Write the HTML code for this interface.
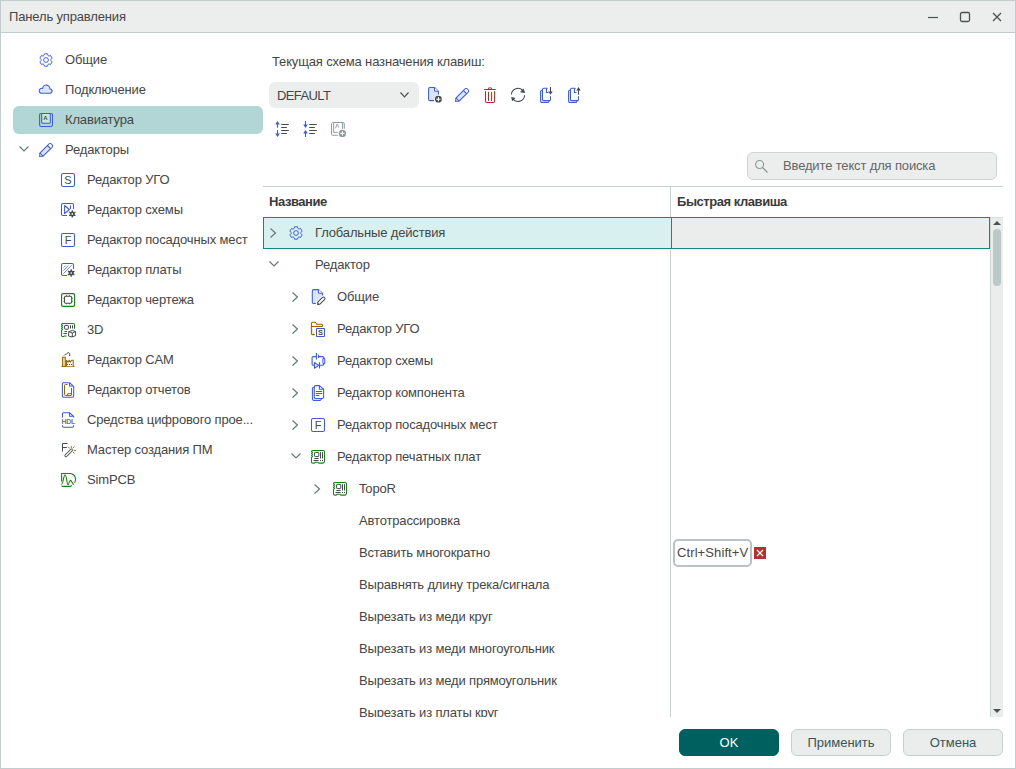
<!DOCTYPE html>
<html><head><meta charset="utf-8">
<style>
*{margin:0;padding:0;box-sizing:border-box}
html,body{width:1016px;height:769px;overflow:hidden;background:#fff}
body{font-family:"Liberation Sans",sans-serif;font-size:13px;color:#464646;position:relative}
.a{position:absolute}
.t{position:absolute;white-space:nowrap;line-height:16px;letter-spacing:-0.15px}
svg{position:absolute;overflow:visible}
#win{left:0;top:0;width:1016px;height:769px;border:1px solid #c3cdcd}
#title{left:1px;top:1px;width:1014px;height:32px;background:#eceeee;border-bottom:1px solid #c3cdcd}
.hl{left:13px;top:106px;width:250px;height:28px;background:#b2d6d5;border-radius:6px}
.combo{left:269px;top:82px;width:150px;height:26px;background:#ebeeed;border-radius:6px}
.search{left:747px;top:152px;width:250px;height:28px;background:#ebeeed;border:1px solid #ccd5d4;border-radius:6px}
.hline{left:263px;top:186px;width:740px;height:1px;background:#c8d0d0}
.vline{left:670px;top:186px;width:1px;height:531px;background:#c8d0d0}
.selrow{left:263px;top:217px;width:727px;height:32px;border:1px solid #138985;background:#d8f1f0}
.selright{left:671px;top:217px;width:319px;height:32px;background:#ebeded;border:1px solid #138985;border-right:1px solid #138985}
.track{left:990px;top:217px;width:13px;height:500px;background:#ebeded;border-left:1px solid #d0d8d8;border-top:1px solid #d6dede}
.thumb{left:993px;top:229px;width:8px;height:57px;background:#bac8c8;border-radius:4px}
.btn{top:729px;width:100px;height:27px;border-radius:6px;background:#ebeded;border:1px solid #c5d0d0;text-align:center;line-height:25px;color:#345656}
.ok{left:679px;background:#005f5f;border-color:#005f5f;color:#fff}
.key{left:673px;top:539px;width:79px;height:28px;border:2px solid #b8c4c4;border-radius:5px;background:#fff}
.redx{left:754px;top:547px;width:12px;height:12px;background:#b03232}
.hdr{font-weight:bold;color:#3a3a3a}
</style></head><body>
<div id="win" class="a"></div>
<div id="title" class="a"></div>
<div class="t" style="left:9px;top:9px">Панель управления</div>
<!-- window controls -->
<svg style="left:920px;top:8px" width="90" height="20">
  <line x1="8" y1="9.5" x2="18" y2="9.5" stroke="#4a5252" stroke-width="1.2"/>
  <rect x="40.5" y="4.5" width="9" height="9" rx="1.5" fill="none" stroke="#4a5252" stroke-width="1.3"/>
  <path d="M73 5 L81 13 M81 5 L73 13" stroke="#4a5252" stroke-width="1.3"/>
</svg>

<!-- sidebar -->
<div class="a hl"></div>
<div class="t" style="left:65px;top:52px">Общие</div>
<div class="t" style="left:65px;top:82px">Подключение</div>
<div class="t" style="left:65px;top:112px">Клавиатура</div>
<div class="t" style="left:65px;top:142px">Редакторы</div>
<div class="t" style="left:87px;top:172px">Редактор УГО</div>
<div class="t" style="left:87px;top:202px">Редактор схемы</div>
<div class="t" style="left:87px;top:232px">Редактор посадочных мест</div>
<div class="t" style="left:87px;top:262px">Редактор платы</div>
<div class="t" style="left:87px;top:292px">Редактор чертежа</div>
<div class="t" style="left:87px;top:322px">3D</div>
<div class="t" style="left:87px;top:352px">Редактор CAM</div>
<div class="t" style="left:87px;top:382px">Редактор отчетов</div>
<div class="t" style="left:87px;top:412px">Средства цифрового прое...</div>
<div class="t" style="left:87px;top:442px">Мастер создания ПМ</div>
<div class="t" style="left:87px;top:472px">SimPCB</div>


<!-- right panel -->
<div class="t" style="left:272px;top:54px">Текущая схема назначения клавиш:</div>
<div class="a combo"></div>
<div class="t" style="left:277px;top:88px;letter-spacing:-0.6px">DEFAULT</div>
<svg style="left:400px;top:92px" width="10" height="6"><path d="M0.5 0.5 L4.5 4.8 L8.5 0.5" fill="none" stroke="#4a5252" stroke-width="1.2"/></svg>

<div class="a search"></div>
<div class="t" style="left:783px;top:158px;color:#666">Введите текст для поиска</div>

<div class="a hline"></div>
<div class="a vline"></div>
<div class="t hdr" style="left:269px;top:194px;letter-spacing:-0.45px">Название</div>
<div class="t hdr" style="left:677px;top:194px;letter-spacing:-0.45px">Быстрая клавиша</div>

<div class="a selrow"></div>
<div class="a selright"></div>
<div class="a track"></div>
<div class="a thumb"></div>
<svg style="left:993px;top:221px" width="8" height="4"><path d="M0 4 L4 0 L8 4Z" fill="#4a5252"/></svg>
<svg style="left:993px;top:709px" width="8" height="4"><path d="M0 0 L4 4 L8 0Z" fill="#4a5252"/></svg>

<div class="a" style="left:263px;top:217px;width:727px;height:500px;overflow:hidden">
<div class="t" style="left:52px;top:8px">Глобальные действия</div>
<div class="t" style="left:52px;top:40px">Редактор</div>
<div class="t" style="left:74px;top:72px">Общие</div>
<div class="t" style="left:74px;top:104px">Редактор УГО</div>
<div class="t" style="left:74px;top:136px">Редактор схемы</div>
<div class="t" style="left:74px;top:168px">Редактор компонента</div>
<div class="t" style="left:74px;top:200px">Редактор посадочных мест</div>
<div class="t" style="left:74px;top:232px">Редактор печатных плат</div>
<div class="t" style="left:96px;top:264px">TopoR</div>
<div class="t" style="left:96px;top:296px">Автотрассировка</div>
<div class="t" style="left:96px;top:328px">Вставить многократно</div>
<div class="t" style="left:96px;top:360px">Выравнять длину трека/сигнала</div>
<div class="t" style="left:96px;top:392px">Вырезать из меди круг</div>
<div class="t" style="left:96px;top:424px">Вырезать из меди многоугольник</div>
<div class="t" style="left:96px;top:456px">Вырезать из меди прямоугольник</div>
<div class="t" style="left:96px;top:488px">Вырезать из платы круг</div>
</div>

<svg style="left:34px;top:48px" width="24" height="24" viewBox="0 0 24 24"><path d="M13.99 7.52 L13.44 5.76 L10.56 5.76 L10.01 7.52 L9.12 8.04 L7.32 7.64 L5.88 10.13 L7.13 11.49 L7.13 12.51 L5.88 13.87 L7.32 16.36 L9.12 15.96 L10.01 16.48 L10.56 18.24 L13.44 18.24 L13.99 16.48 L14.88 15.96 L16.68 16.36 L18.12 13.87 L16.87 12.51 L16.87 11.49 L18.12 10.13 L16.68 7.64 L14.88 8.04Z" fill="none" stroke="#3d5bd6" stroke-width="0.95" stroke-linejoin="round"/><circle cx="12" cy="12" r="2.4" fill="none" stroke="#3d5bd6" stroke-width="0.95"/></svg>
<svg style="left:34.4px;top:80px" width="24" height="24" viewBox="0 0 24 24"><path d="M6.9 13.3 H15.9 A2.2 2.2 0 0 0 15.9 8.9 A3.6 3.6 0 0 0 8.7 8.5 A2.45 2.45 0 0 0 6.9 13.3Z" fill="#dbe4fb" stroke="#3d5bd6" stroke-width="1.05" stroke-linejoin="round"/></svg>
<svg style="left:35px;top:108px" width="24" height="24" viewBox="0 0 24 24"><path d="M6.4 5.4 H5.9 A1.3 1.3 0 0 0 4.6 6.7 V17.1 A1.3 1.3 0 0 0 5.9 18.4 H16.2 A1.3 1.3 0 0 0 17.5 17.1 V6.7 A1.3 1.3 0 0 0 16.2 5.4 H15.6" fill="none" stroke="#3d5bd6" stroke-width="1.05"/><path d="M6.7 5.4 H15.3 V14.6 A0.6 0.6 0 0 1 14.7 15.2 H7.3 A0.6 0.6 0 0 1 6.7 14.6Z" fill="#c9e8dd" stroke="#3d5bd6" stroke-width="1.05"/><text x="10.4" y="11.8" text-anchor="middle" font-family="Liberation Sans" font-weight="bold" font-size="6" fill="#424c4c">A</text></svg>
<svg style="left:36px;top:138px" width="24" height="24" viewBox="0 0 24 24"><g transform="rotate(-45 9.3 12.8)"><path d="M1.500000000000001 12.8 L3.9000000000000012 10.55 H16.15 A2.25 2.25 0 0 1 16.15 15.05 H3.9000000000000012 Z" fill="#dbe4fb" stroke="#3d5bd6" stroke-width="1.1" stroke-linejoin="round"/><path d="M0.5000000000000011 12.8 L1.8000000000000012 12.0 V13.600000000000001Z" fill="#3d5bd6"/><path d="M14.549999999999999 11.05 H16.15 A1.75 1.75 0 0 1 16.15 14.55 H14.549999999999999Z" fill="#fff"/><path d="M3.9000000000000012 10.55 V15.05 M14.549999999999999 10.55 V15.05" stroke="#3d5bd6" stroke-width="1.1"/><path d="M2.4000000000000012 12.3 L3.300000000000001 11.700000000000001 V13.9Z" fill="#fff"/></g></svg>
<svg style="left:17px;top:144px" width="14" height="10" viewBox="0 0 14 10"><path d="M2.5 2.5 L7 7 L11.5 2.5" fill="none" stroke="#6b7777" stroke-width="1.2"/></svg>
<svg style="left:57px;top:168px" width="24" height="24" viewBox="0 0 24 24"><rect x="4.5" y="5.5" width="13" height="13" rx="1.6" fill="#fff" stroke="#3d5bd6" stroke-width="1.05"/><text x="11" y="16.2" text-anchor="middle" font-family="Liberation Sans" font-size="11" fill="#424c4c">S</text></svg>
<svg style="left:57px;top:198px" width="24" height="24" viewBox="0 0 24 24"><path d="M10 17.5 H6 A1.5 1.5 0 0 1 4.5 16 V7 A1.5 1.5 0 0 1 6 5.5 H15 A1.5 1.5 0 0 1 16.5 7 V11" fill="none" stroke="#3d5bd6" stroke-width="1.05"/><path d="M7.6 7.5 V15.5 L12.4 11.5Z" fill="none" stroke="#3d5bd6" stroke-width="1.05" stroke-linejoin="round"/><path d="M13.5 7.4 V11" stroke="#3d5bd6" stroke-width="1.05"/><circle cx="15.3" cy="15.9" r="3.3" fill="#fff"/><path d="M15.30 19.60 L15.30 12.20" stroke="#424c4c" stroke-width="1.25"/><path d="M12.10 17.75 L18.50 14.05" stroke="#424c4c" stroke-width="1.25"/><path d="M18.50 17.75 L12.10 14.05" stroke="#424c4c" stroke-width="1.25"/><circle cx="15.3" cy="15.9" r="1.75" fill="none" stroke="#424c4c" stroke-width="1.5"/><circle cx="15.3" cy="15.9" r="0.85" fill="#fff"/></svg>
<svg style="left:57px;top:228px" width="24" height="24" viewBox="0 0 24 24"><rect x="4.5" y="5.5" width="13" height="13" rx="1.6" fill="#fff" stroke="#3d5bd6" stroke-width="1.05"/><text x="11" y="16.2" text-anchor="middle" font-family="Liberation Sans" font-size="11" fill="#424c4c">F</text></svg>
<svg style="left:57px;top:258px" width="24" height="24" viewBox="0 0 24 24"><path d="M10 17.5 H6 A1.5 1.5 0 0 1 4.5 16 V7 A1.5 1.5 0 0 1 6 5.5 H15 A1.5 1.5 0 0 1 16.5 7 V11" fill="none" stroke="#3d5bd6" stroke-width="1.05"/><path d="M6.5 9.5 L8.5 7.5 M6.5 12.5 L11.5 7.5 M6.5 15.5 L14.5 7.5" stroke="#3d5bd6" stroke-width="0.95" stroke-opacity="0.8"/><circle cx="14.2" cy="15" r="3.3" fill="#fff"/><path d="M14.20 18.70 L14.20 11.30" stroke="#424c4c" stroke-width="1.25"/><path d="M11.00 16.85 L17.40 13.15" stroke="#424c4c" stroke-width="1.25"/><path d="M17.40 16.85 L11.00 13.15" stroke="#424c4c" stroke-width="1.25"/><circle cx="14.2" cy="15" r="1.75" fill="none" stroke="#424c4c" stroke-width="1.5"/><circle cx="14.2" cy="15" r="0.85" fill="#fff"/></svg>
<svg style="left:57px;top:288px" width="24" height="24" viewBox="0 0 24 24"><rect x="4.6" y="5.6" width="13" height="12.8" rx="1.3" fill="none" stroke="#178217" stroke-width="1.15"/><rect x="7.5" y="8.3" width="7.2" height="7" rx="1.2" fill="none" stroke="#424c4c" stroke-width="1.05"/><path d="M9.5 7.3 V8.3 M12.5 7.3 V8.3 M9.5 15.3 V16.3 M12.5 15.3 V16.3 M6.5 10.3 H7.5 M6.5 13.3 H7.5 M14.7 10.3 H15.7 M14.7 13.3 H15.7" stroke="#424c4c" stroke-width="1"/></svg>
<svg style="left:57px;top:318px" width="24" height="24" viewBox="0 0 24 24"><path d="M9.6 17.9 H7.5 L7 18.4 H5.7 A1.2 1.2 0 0 1 4.5 17.2 V12.3 L5.6 11.4 L4.5 10.4 L5.6 9.4 L4.5 8.4 L5.6 7.4 L4.5 6.7 A1.2 1.2 0 0 1 5.7 5.5 H16.3 A1.2 1.2 0 0 1 17.5 6.7 V10.7" fill="none" stroke="#178217" stroke-width="1.05" stroke-linejoin="round"/><rect x="7.6" y="7.5" width="3.8" height="3.7" rx="0.5" fill="none" stroke="#424c4c" stroke-width="1"/><path d="M13.5 7.3 V10.5 M15.5 7.3 V10.5 M7.5 13.5 H10 M6.5 15.5 H10" stroke="#424c4c" stroke-width="1"/><path d="M11.8 13.6 L15.5 12.4 L18.6 13.6 V17.6 L15 19 L11.5 18 Z M11.8 13.6 L15.3 15 L18.6 13.6 M15.3 15 V19" fill="#fff" stroke="#424c4c" stroke-width="1" stroke-linejoin="round"/></svg>
<svg style="left:57px;top:348px" width="24" height="24" viewBox="0 0 24 24"><path d="M4.5 18.4 H17.5" stroke="#956600" stroke-width="1.1"/><rect x="5.6" y="9.3" width="2.7" height="9" fill="#f0e4c8" stroke="#956600" stroke-width="1.05"/><path d="M9.5 18.2 V12.3 L11 14.3 L12.2 12.3 L13.3 14.3 L14.5 12.3 L16.2 12.3 V18.2" fill="#fff" stroke="#956600" stroke-width="1.05" stroke-linejoin="round"/><circle cx="10.5" cy="16.4" r="0.55" fill="#424c4c"/><circle cx="12.5" cy="16.4" r="0.55" fill="#424c4c"/><circle cx="14.5" cy="16.4" r="0.55" fill="#424c4c"/><path d="M7 7.5 C8 6 9.5 6.5 10 5.5 C11 4 13.8 4.5 12.5 8" fill="none" stroke="#424c4c" stroke-width="1"/></svg>
<svg style="left:57px;top:378px" width="24" height="24" viewBox="0 0 24 24"><path d="M6.3 4.7 H12.5 L16.7 8.4 V18 A1.2 1.2 0 0 1 15.5 19.2 H6.6 A1.2 1.2 0 0 1 5.4 18 V5.9 A1.2 1.2 0 0 1 6.3 4.7Z M12.5 4.7 V8 H16.5" fill="#fff" stroke="#3d5bd6" stroke-width="1.05" stroke-linejoin="round"/><path d="M10.5 6.5 H8.4 A1 1 0 0 0 7.5 7.5 V16.5 A1 1 0 0 0 8.5 17.5 H14 A0.6 0.6 0 0 0 14.5 17 V10" fill="none" stroke="#956600" stroke-width="1"/><path d="M10.5 17.5 V16.2 A0.6 0.6 0 0 1 11 15.7 H14.5" fill="none" stroke="#956600" stroke-width="1"/></svg>
<svg style="left:57px;top:408px" width="24" height="24" viewBox="0 0 24 24"><path d="M5.5 9.5 V5.9 A1.2 1.2 0 0 1 6.6 4.7 H12.5 L16.7 8.5 V9.5 M12.5 4.7 V8.2 H16.5 M5.5 17.3 V18 A1.2 1.2 0 0 0 6.6 19.2 H15.5 A1.2 1.2 0 0 0 16.6 18 V17.3" fill="none" stroke="#3d5bd6" stroke-width="1.05" stroke-linejoin="round"/><text x="11.2" y="16" text-anchor="middle" font-family="Liberation Sans" font-weight="bold" font-size="7" fill="#6f7878" letter-spacing="-0.4">HDL</text></svg>
<svg style="left:57px;top:438px" width="24" height="24" viewBox="0 0 24 24"><path d="M5.5 13.6 V5.5 H10.5 M5.5 9.5 H9.8" fill="none" stroke="#424c4c" stroke-width="1"/><path d="M8.9 17.6 L14.4 12.1" stroke="#5a6464" stroke-width="3.2" stroke-linecap="round"/><path d="M8.9 17.6 L14.4 12.1" stroke="#fff" stroke-width="1.3" stroke-linecap="round"/><path d="M14.3 8.3 V9.9 M17 8.8 L16 10 M18.6 12.5 H17.2 M17.3 15.2 L16.2 14.2 M11.3 9 L12.5 10.2" stroke="#956600" stroke-width="0.9" stroke-linecap="round"/></svg>
<svg style="left:57px;top:468px" width="24" height="24" viewBox="0 0 24 24"><path d="M4.6 13.6 V5.5 H13.5 A6 6 0 0 1 17.6 14.8 M4.6 18.4 H13.5 L14.8 17.3" fill="none" stroke="#178217" stroke-width="1.1"/><path d="M4.3 16.4 C6.5 16.4 6.3 7 8 7 C9.7 7 9.8 16.7 11 16.7 C12 16.7 12.3 12.4 13.5 12.4 C14.7 12.4 15.5 16.5 17 16.6" fill="none" stroke="#178217" stroke-width="1.1"/></svg>
<svg style="left:424px;top:83px" width="24" height="24" viewBox="0 0 24 24"><path d="M10 17.6 H6 A1.4 1.4 0 0 1 4.6 16.2 V5.9 A1.4 1.4 0 0 1 6 4.5 H10.5 L14.5 8.3 V11.5" fill="#dbe4fb" stroke="#3d5bd6" stroke-width="1.05" stroke-linejoin="round"/><path d="M10.5 4.5 V7.2 A1 1 0 0 0 11.5 8.2 H14.5" fill="#fff" stroke="#3d5bd6" stroke-width="1.05"/><circle cx="14.4" cy="16.2" r="3.4" fill="#424c4c"/><path d="M14.4 14.1 V18.3 M12.3 16.2 H16.5" stroke="#fff" stroke-width="1.1"/></svg>
<svg style="left:452px;top:83px" width="24" height="24" viewBox="0 0 24 24"><g transform="rotate(-45 9.3 12.8)"><path d="M1.500000000000001 12.8 L3.9000000000000012 10.55 H16.15 A2.25 2.25 0 0 1 16.15 15.05 H3.9000000000000012 Z" fill="#dbe4fb" stroke="#3d5bd6" stroke-width="1.1" stroke-linejoin="round"/><path d="M0.5000000000000011 12.8 L1.8000000000000012 12.0 V13.600000000000001Z" fill="#3d5bd6"/><path d="M14.549999999999999 11.05 H16.15 A1.75 1.75 0 0 1 16.15 14.55 H14.549999999999999Z" fill="#fff"/><path d="M3.9000000000000012 10.55 V15.05 M14.549999999999999 10.55 V15.05" stroke="#3d5bd6" stroke-width="1.1"/><path d="M2.4000000000000012 12.3 L3.300000000000001 11.700000000000001 V13.9Z" fill="#fff"/></g></svg>
<svg style="left:480px;top:83px" width="24" height="24" viewBox="0 0 24 24"><path d="M4.2 6.5 H15.8 M8.3 6.5 A1.7 1.7 0 0 1 11.7 6.5" fill="none" stroke="#b02c2c" stroke-width="1.05"/><path d="M5.5 8.4 V18 A1.4 1.4 0 0 0 6.9 19.4 H13.3 A1.4 1.4 0 0 0 14.6 18 V8.4 M8.5 9.3 V17.5 M11.6 9.3 V17.5" fill="none" stroke="#b02c2c" stroke-width="1.05" stroke-linecap="round"/></svg>
<svg style="left:508px;top:83px" width="24" height="24" viewBox="0 0 24 24"><path d="M3.4 11.5 A6.6 6.6 0 0 1 14.8 7.5" fill="none" stroke="#424c4c" stroke-width="1.05"/><path d="M15.4 5.8 L16.7 9.7 L12.6 9.1Z" fill="#424c4c" stroke="#424c4c" stroke-width="0.6" stroke-linejoin="round"/><path d="M16.6 12.2 A6.6 6.6 0 0 1 5.4 16.6" fill="none" stroke="#424c4c" stroke-width="1.05"/><path d="M3.5 14.3 L7.1 15.2 L4.4 17.9Z" fill="#424c4c" stroke="#424c4c" stroke-width="0.6" stroke-linejoin="round"/></svg>
<svg style="left:536px;top:83px" width="24" height="24" viewBox="0 0 24 24"><path d="M6.5 7.2 H5.8 A1.2 1.2 0 0 0 4.6 8.4 V18.3 A1.2 1.2 0 0 0 5.8 19.5 H11.7 A1.2 1.2 0 0 0 12.9 18.3 V17.6" fill="#dbe4fb" stroke="#3d5bd6" stroke-width="1.05"/><path d="M11.5 5.9 L10.8 5.3 H7.7 A1.2 1.2 0 0 0 6.5 6.5 V16.4 A1.2 1.2 0 0 0 7.7 17.6 H13.3 A1.2 1.2 0 0 0 14.5 16.4 V13.3" fill="#fff" stroke="#3d5bd6" stroke-width="1.05"/><path d="M10.5 5.8 V9.5 H12.5" fill="none" stroke="#3d5bd6" stroke-width="1.05"/><path d="M14.5 4 V10.5" stroke="#424c4c" stroke-width="1.1"/><path d="M12.3 8.4 H16.7 L14.5 11.8Z" fill="#424c4c"/></svg>
<svg style="left:564px;top:83px" width="24" height="24" viewBox="0 0 24 24"><path d="M6.5 7.2 H5.8 A1.2 1.2 0 0 0 4.6 8.4 V18.3 A1.2 1.2 0 0 0 5.8 19.5 H11.7 A1.2 1.2 0 0 0 12.9 18.3 V17.6" fill="#dbe4fb" stroke="#3d5bd6" stroke-width="1.05"/><path d="M11.5 5.9 L10.8 5.3 H7.7 A1.2 1.2 0 0 0 6.5 6.5 V16.4 A1.2 1.2 0 0 0 7.7 17.6 H13.3 A1.2 1.2 0 0 0 14.5 16.4 V13.3" fill="#fff" stroke="#3d5bd6" stroke-width="1.05"/><path d="M10.5 5.8 V9.5 H12.5" fill="none" stroke="#3d5bd6" stroke-width="1.05"/><path d="M14.5 6.5 V11.7" stroke="#424c4c" stroke-width="1.1"/><path d="M12.3 7.6 H16.7 L14.5 4.1Z" fill="#424c4c"/></svg>
<svg style="left:270px;top:117px" width="24" height="24" viewBox="0 0 24 24"><path d="M7.5 5 V10.8 M7.5 13 V19" stroke="#3d5bd6" stroke-width="1.1"/><path d="M5.2 7.6 L7.5 4.1 L9.8 7.6Z M5.2 16.4 L7.5 19.9 L9.8 16.4Z" fill="#3d5bd6"/><path d="M11.2 7.5 H18.8 M11.2 10.5 H16.8 M11.2 13.5 H18.8 M11.2 16.5 H16.8" stroke="#424c4c" stroke-width="1.05"/></svg>
<svg style="left:298px;top:117px" width="24" height="24" viewBox="0 0 24 24"><path d="M7.5 4 V9.5 M7.5 14 V20" stroke="#3d5bd6" stroke-width="1.1"/><path d="M5.2 7.4 L7.5 10.9 L9.8 7.4Z M5.2 16.6 L7.5 13.1 L9.8 16.6Z" fill="#3d5bd6"/><path d="M11.2 7.5 H18.8 M11.2 10.5 H16.8 M11.2 13.5 H18.8 M11.2 16.5 H16.8" stroke="#424c4c" stroke-width="1.05"/></svg>
<svg style="left:326px;top:117px" width="24" height="24" viewBox="0 0 24 24"><path d="M6.2 5.9 A1 1 0 0 0 5.5 6.9 V17.3 A1 1 0 0 0 6.5 18.3 H11.8 M6.3 5.5 H17.2 A1.1 1.1 0 0 1 18.3 6.6 V11.8 M7.6 5.5 V15.3 H11.8 M16.6 5.5 V11.8" fill="none" stroke="#8c9999" stroke-width="0.95"/><path d="M9.5 11.3 L10.8 7.4 H11.5 L12.6 10.6" fill="none" stroke="#8c9999" stroke-width="0.9"/><circle cx="16.4" cy="16.4" r="3.6" fill="#8c9999"/><path d="M16.4 14.2 V18.6 M14.2 16.4 H18.6" stroke="#fff" stroke-width="1.1"/></svg>
<svg style="left:749px;top:154px" width="24" height="24" viewBox="0 0 24 24"><circle cx="10.6" cy="10.5" r="4" fill="none" stroke="#8a9696" stroke-width="1.05"/><path d="M13.5 13.5 L18.5 18.5" stroke="#8a9696" stroke-width="1.1"/></svg>
<svg style="left:268px;top:226px" width="12" height="14" viewBox="0 0 12 14"><path d="M2.5 2.5 L7.5 7 L2.5 11.5" fill="none" stroke="#6b7777" stroke-width="1.2"/></svg>
<svg style="left:284px;top:221px" width="24" height="24" viewBox="0 0 24 24"><path d="M13.99 7.52 L13.44 5.76 L10.56 5.76 L10.01 7.52 L9.12 8.04 L7.32 7.64 L5.88 10.13 L7.13 11.49 L7.13 12.51 L5.88 13.87 L7.32 16.36 L9.12 15.96 L10.01 16.48 L10.56 18.24 L13.44 18.24 L13.99 16.48 L14.88 15.96 L16.68 16.36 L18.12 13.87 L16.87 12.51 L16.87 11.49 L18.12 10.13 L16.68 7.64 L14.88 8.04Z" fill="none" stroke="#3d5bd6" stroke-width="0.95" stroke-linejoin="round"/><circle cx="12" cy="12" r="2.4" fill="none" stroke="#3d5bd6" stroke-width="0.95"/></svg>
<svg style="left:267px;top:259px" width="14" height="10" viewBox="0 0 14 10"><path d="M2.5 2.5 L7 7 L11.5 2.5" fill="none" stroke="#6b7777" stroke-width="1.2"/></svg>
<svg style="left:290px;top:290px" width="12" height="14" viewBox="0 0 12 14"><path d="M2.5 2.5 L7.5 7 L2.5 11.5" fill="none" stroke="#6b7777" stroke-width="1.2"/></svg>
<svg style="left:290px;top:322px" width="12" height="14" viewBox="0 0 12 14"><path d="M2.5 2.5 L7.5 7 L2.5 11.5" fill="none" stroke="#6b7777" stroke-width="1.2"/></svg>
<svg style="left:290px;top:354px" width="12" height="14" viewBox="0 0 12 14"><path d="M2.5 2.5 L7.5 7 L2.5 11.5" fill="none" stroke="#6b7777" stroke-width="1.2"/></svg>
<svg style="left:290px;top:386px" width="12" height="14" viewBox="0 0 12 14"><path d="M2.5 2.5 L7.5 7 L2.5 11.5" fill="none" stroke="#6b7777" stroke-width="1.2"/></svg>
<svg style="left:290px;top:418px" width="12" height="14" viewBox="0 0 12 14"><path d="M2.5 2.5 L7.5 7 L2.5 11.5" fill="none" stroke="#6b7777" stroke-width="1.2"/></svg>
<svg style="left:289px;top:451px" width="14" height="10" viewBox="0 0 14 10"><path d="M2.5 2.5 L7 7 L11.5 2.5" fill="none" stroke="#6b7777" stroke-width="1.2"/></svg>
<svg style="left:312px;top:482px" width="12" height="14" viewBox="0 0 12 14"><path d="M2.5 2.5 L7.5 7 L2.5 11.5" fill="none" stroke="#6b7777" stroke-width="1.2"/></svg>
<svg style="left:306px;top:285px" width="24" height="24" viewBox="0 0 24 24"><path d="M9.8 18.5 H7.6 A1.3 1.3 0 0 1 6.3 17.2 V5.9 A1.3 1.3 0 0 1 7.6 4.6 H12.4 L16.6 8.3 V10.5" fill="#dbe4fb" stroke="#3d5bd6" stroke-width="1.05" stroke-linejoin="round"/><path d="M12.4 4.6 V7.3 A1 1 0 0 0 13.4 8.3 H16.6" fill="#fff" stroke="#3d5bd6" stroke-width="1.05"/><g transform="rotate(-45 15 16)"><path d="M9.8 16 L12 14.4 H18.6 A1.6 1.6 0 0 1 18.6 17.6 H12 Z" fill="#fff" stroke="#fff" stroke-width="2"/><path d="M10.2 16 L12 14.5 H18.5 A1.5 1.5 0 0 1 18.5 17.5 H12 Z" fill="#fff" stroke="#424c4c" stroke-width="1.05" stroke-linejoin="round"/><path d="M10 16 L11.4 15 V17Z" fill="#424c4c"/></g></svg>
<svg style="left:306px;top:317px" width="24" height="24" viewBox="0 0 24 24"><path d="M8.7 17.6 H6.6 A1.2 1.2 0 0 1 5.4 16.4 V6.4 A1.2 1.2 0 0 1 6.6 5.2 H9.3 L10.8 7.3 H15.6 A1 1 0 0 1 16.6 8.3 V8.6 A1 1 0 0 1 15.6 9.5 H5.6" fill="#f0e4c8" stroke="#956600" stroke-width="1.05" stroke-linejoin="round"/><path d="M6 6 H9 L10.3 8 H15.8 V8.9 H6Z" fill="#fff"/><rect x="10.5" y="11.5" width="8" height="8" rx="0.5" fill="#fff" stroke="#3d5bd6" stroke-width="1.05"/><text x="14.5" y="18.2" text-anchor="middle" font-family="Liberation Sans" font-weight="bold" font-size="7.5" fill="#424c4c">S</text></svg>
<svg style="left:306px;top:349px" width="24" height="24" viewBox="0 0 24 24"><path d="M10.4 7.6 H7.3 A1.2 1.2 0 0 0 6.1 8.8 V15 A1.2 1.2 0 0 0 7.3 16.2 H8.3 M12.5 7.6 H16.6 A1.2 1.2 0 0 1 17.8 8.8 V9.2 M17.8 14.6 V15 A1.2 1.2 0 0 1 16.6 16.2 H13.5" fill="none" stroke="#3d5bd6" stroke-width="1.1"/><path d="M10.4 4 V10.5 M12.5 5.5 V9 M13.5 13.3 V19.6" stroke="#3d5bd6" stroke-width="1.1"/><rect x="16.9" y="9.3" width="1.9" height="5.3" rx="0.9" fill="#fff" stroke="#3d5bd6" stroke-width="1.05"/><path d="M8.4 13.5 L12.9 16.4 L8.4 19.3Z" fill="#dbe4fb" stroke="#3d5bd6" stroke-width="1.05" stroke-linejoin="round"/></svg>
<svg style="left:306px;top:381px" width="24" height="24" viewBox="0 0 24 24"><path d="M8.3 6.3 H7.7 A1.3 1.3 0 0 0 6.4 7.6 V18.1 A1.3 1.3 0 0 0 7.7 19.4 H14 A1.3 1.3 0 0 0 15.3 18.1 V17.6" fill="#dbe4fb" stroke="#3d5bd6" stroke-width="1.05"/><path d="M9.6 4.6 H13.4 L17.6 8.2 V16.2 A1.3 1.3 0 0 1 16.3 17.5 H9.6 A1.3 1.3 0 0 1 8.3 16.2 V5.9 A1.3 1.3 0 0 1 9.6 4.6Z" fill="#fff" stroke="#3d5bd6" stroke-width="1.05" stroke-linejoin="round"/><path d="M13.4 4.6 V8.2 H17.4" fill="none" stroke="#3d5bd6" stroke-width="1.05"/><path d="M10.3 10.4 H15.8 M10.3 12.5 H15.8 M10.3 14.5 H12.9" stroke="#3d5bd6" stroke-width="1.05" stroke-linecap="round"/></svg>
<svg style="left:306px;top:413px" width="24" height="24" viewBox="0 0 24 24"><rect x="5.5" y="5.5" width="13" height="13" rx="1.6" fill="#fff" stroke="#3d5bd6" stroke-width="1.05"/><text x="12" y="16.2" text-anchor="middle" font-family="Liberation Sans" font-size="11" fill="#424c4c">F</text></svg>
<svg style="left:306px;top:445px" width="24" height="24" viewBox="0 0 24 24"><path d="M6.5 5.5 H17.3 A1.2 1.2 0 0 1 18.5 6.7 V16.8 L17.2 18.1 H12.8 L12 17.3 H9 L8.2 18.1 H6.5 A1.2 1.2 0 0 1 5.5 17.1 V12.3 L6.6 11.4 L5.5 10.4 L6.6 9.4 L5.5 8.4 L6.6 7.4 L5.5 6.6 A1.1 1.1 0 0 1 6.6 5.5Z" fill="#fff" stroke="#178217" stroke-width="1.05" stroke-linejoin="round"/><rect x="8.6" y="7.4" width="4.2" height="4.2" rx="0.6" fill="none" stroke="#424c4c" stroke-width="1"/><path d="M14.5 7.2 V13.5 M16.5 7.2 V13.5 M8.4 13.5 H12.6 M7.5 15.5 H12.6" stroke="#424c4c" stroke-width="1"/><rect x="14" y="15" width="1" height="1" fill="#424c4c"/><rect x="16" y="15" width="1" height="1" fill="#424c4c"/></svg>
<svg style="left:328px;top:477px" width="24" height="24" viewBox="0 0 24 24"><path d="M6.5 5.5 H17.3 A1.2 1.2 0 0 1 18.5 6.7 V16.8 L17.2 18.1 H12.8 L12 17.3 H9 L8.2 18.1 H6.5 A1.2 1.2 0 0 1 5.5 17.1 V12.3 L6.6 11.4 L5.5 10.4 L6.6 9.4 L5.5 8.4 L6.6 7.4 L5.5 6.6 A1.1 1.1 0 0 1 6.6 5.5Z" fill="#fff" stroke="#178217" stroke-width="1.05" stroke-linejoin="round"/><rect x="8.6" y="7.4" width="4.2" height="4.2" rx="0.6" fill="none" stroke="#424c4c" stroke-width="1"/><path d="M14.5 7.2 V13.5 M16.5 7.2 V13.5 M8.4 13.5 H12.6 M7.5 15.5 H12.6" stroke="#424c4c" stroke-width="1"/><rect x="14" y="15" width="1" height="1" fill="#424c4c"/><rect x="16" y="15" width="1" height="1" fill="#424c4c"/></svg>

<div class="a key"></div>
<div class="t" style="left:677px;top:545px;letter-spacing:0.1px">Ctrl+Shift+V</div>
<div class="a redx"></div>
<svg style="left:754px;top:547px" width="12" height="12"><path d="M3 3 L9 9 M9 3 L3 9" stroke="#fff" stroke-width="1.2"/></svg>

<div class="a btn ok">OK</div>
<div class="a btn" style="left:791px">Применить</div>
<div class="a btn" style="left:903px">Отмена</div>
</body></html>
